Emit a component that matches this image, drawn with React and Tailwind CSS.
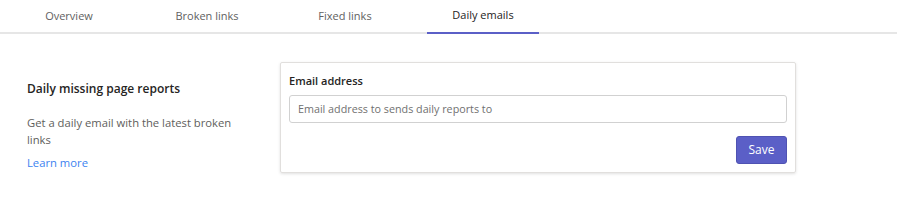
export default function App() {
  const tabs = ["Overview", "Broken links", "Fixed links", "Daily emails"];
  return (
    <div className="w-[897px] h-[207px] bg-white" style={{ fontFamily: '"Open Sans", "Noto Sans", sans-serif' }}>
      <div className="flex pl-[13px] gap-[26px] border-b-2 border-[#e6e6e6] h-[34px]">
        {tabs.map((t, i) => (
          <div
            key={t}
            className={`w-[112px] flex items-center justify-center h-[34px] text-[11px] ${
              i === 3 ? "text-[#252423] border-b-[2px] border-[#5b5fc7]" : "text-[#616161]"
            }`}
          >
            <span className="-mt-[1px]">{t}</span>
          </div>
        ))}
      </div>
      <div className="flex pl-[27px] pt-[28px]">
        <div className="w-[253px] pt-[18px] pr-[36px]">
          <div className="text-[12px] font-semibold text-[#252423] leading-[18px]">Daily missing page reports</div>
          <div className="mt-[16px] text-[11.25px] text-[#605e5c] leading-[17px]">
            Get a daily email with the latest broken links
          </div>
          <div className="mt-[6px] text-[11.25px] text-[#3b82f0] leading-[17px]">Learn more</div>
        </div>
        <div className="w-[516px] border border-[#e1dfdd] rounded-[2px] shadow-[0_1px_3px_rgba(0,0,0,0.12)] px-[8px] pt-[9px] pb-[8px]">
          <div className="text-[11px] font-semibold text-[#252423] leading-[18px]">Email address</div>
          <div className="mt-[5px] h-[28px] border border-[#d1d1d1] rounded-[3px] flex items-center px-[8px] text-[10.75px] text-[#707070]">
            Email address to sends daily reports to
          </div>
          <div className="flex justify-end mt-[13px]">
            <button className="w-[51px] h-[28px] bg-[#5b5fc7] border border-[#4f52b2] rounded-[3px] text-white text-[12px]">
              Save
            </button>
          </div>
        </div>
      </div>
    </div>
  );
}
